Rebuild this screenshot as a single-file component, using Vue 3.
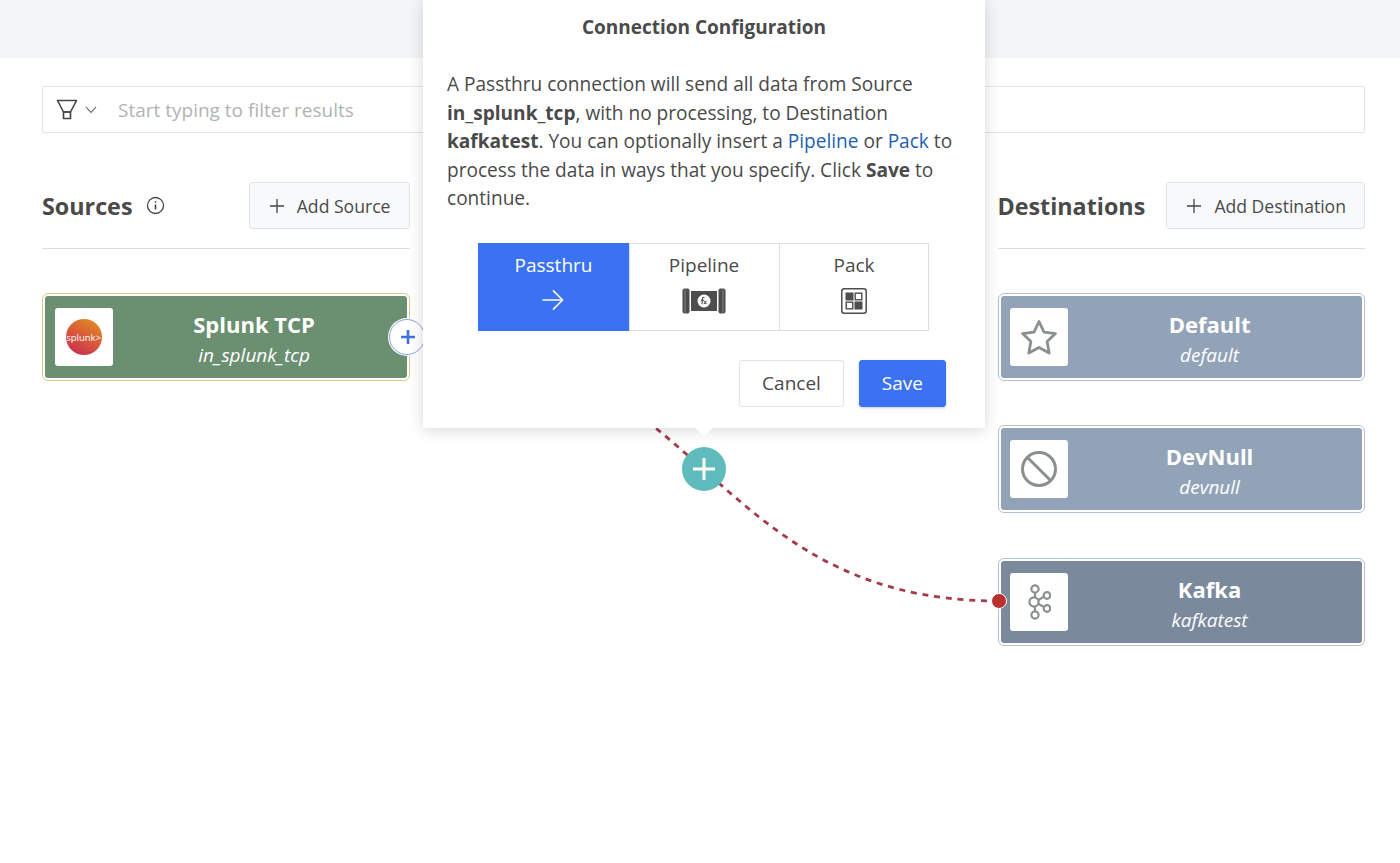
<script setup>
const destinations = [
  { name: 'Default', id: 'default', icon: 'star' },
  { name: 'DevNull', id: 'devnull', icon: 'null' },
  { name: 'Kafka', id: 'kafkatest', icon: 'kafka', active: true }
]
</script>

<template>
  <div class="page">
    <div class="topbar"></div>

    <main class="content">
      <div class="filter">
        <svg class="filter-icon" width="22" height="21" viewBox="0 0 22 21" fill="none" stroke="#444" stroke-width="1.6">
          <path d="M1.5 1.5h19L14.5 13H7.5z" stroke-linejoin="round" />
          <path d="M7.5 13h7v6.5h-7z" stroke-linejoin="round" />
        </svg>
        <svg class="chevron" width="12" height="8" viewBox="0 0 12 8" fill="none" stroke="#555" stroke-width="1.1">
          <path d="M1 1l5 5.5L11 1" />
        </svg>
        <span class="placeholder">Start typing to filter results</span>
      </div>

      <div class="columns">
        <section class="column">
          <header class="col-head">
            <h2>Sources</h2>
            <svg class="info" width="19" height="19" viewBox="0 0 19 19" fill="none" stroke="#444" stroke-width="1.3">
              <circle cx="9.5" cy="9.5" r="8" />
              <path d="M9.5 8.5v5M9.5 5.2v1.6" stroke-width="1.6" />
            </svg>
            <button class="add-btn">
              <svg width="14" height="14" viewBox="0 0 14 14" stroke="#444" stroke-width="1.3"><path d="M7 0v14M0 7h14" /></svg>
              Add Source
            </button>
          </header>
          <div class="cards">
            <div class="card source">
              <div class="card-inner">
                <div class="logo">
                  <div class="splunk">splunk&gt;</div>
                </div>
                <div class="card-text">
                  <div class="card-name">Splunk TCP</div>
                  <div class="card-id">in_splunk_tcp</div>
                </div>
              </div>
            </div>
          </div>
        </section>

        <section class="column">
          <header class="col-head">
            <h2>Destinations</h2>
            <button class="add-btn">
              <svg width="14" height="14" viewBox="0 0 14 14" stroke="#444" stroke-width="1.3"><path d="M7 0v14M0 7h14" /></svg>
              Add Destination
            </button>
          </header>
          <div class="cards">
            <div v-for="d in destinations" :key="d.id" class="card" :class="{ active: d.active }">
              <div class="card-inner">
                <div class="logo">
                  <svg v-if="d.icon === 'star'" width="38" height="36" viewBox="0 0 38 36" fill="none" stroke="#8a8f90" stroke-width="2.8" stroke-linejoin="round">
                    <path d="M19 2.5l5 10.6 11.5 1.5-8.4 8 2.1 11.4L19 28.4 8.8 34l2.1-11.4-8.4-8 11.5-1.5z" />
                  </svg>
                  <svg v-else-if="d.icon === 'null'" width="38" height="38" viewBox="0 0 38 38" fill="none" stroke="#8a8f90" stroke-width="3">
                    <circle cx="19" cy="19" r="16.5" />
                    <path d="M7.5 7.5l23 23" />
                  </svg>
                  <svg v-else width="24" height="36" viewBox="0 0 24 36" fill="none" stroke="#8a8f90" stroke-width="2.2">
                    <circle cx="8" cy="5" r="3.6" />
                    <circle cx="7" cy="18" r="4.6" />
                    <circle cx="8" cy="31" r="3.6" />
                    <circle cx="20" cy="11.5" r="3.3" />
                    <circle cx="20" cy="24.5" r="3.3" />
                    <path d="M8 8.8V13M8 22.8v4.4M11.5 16l5.5-3.4M11.5 20l5.5 3" />
                  </svg>
                </div>
                <div class="card-text">
                  <div class="card-name">{{ d.name }}</div>
                  <div class="card-id">{{ d.id }}</div>
                </div>
              </div>
            </div>
          </div>
        </section>
      </div>
    </main>

    <svg class="wire" width="1400" height="863" viewBox="0 0 1400 863" fill="none">
      <path d="M407 337C703 337 703 601 999 601" stroke="#a63a48" stroke-width="2.8" stroke-dasharray="6 5.8" />
    </svg>

    <div class="port">
      <svg width="14" height="14" viewBox="0 0 14 14" stroke="#3f72d8" stroke-width="2.6"><path d="M7 0v14M0 7h14" /></svg>
    </div>
    <div class="mid-plus">
      <svg width="22" height="22" viewBox="0 0 22 22" stroke="#fff" stroke-width="3"><path d="M11 0v22M0 11h22" /></svg>
    </div>
    <div class="end-dot"></div>

    <div class="modal">
      <div class="modal-title">Connection Configuration</div>
      <p class="modal-body">
        A Passthru connection will send all data from Source <b>in_splunk_tcp</b>, with no processing, to Destination
        <b>kafkatest</b>. You can optionally insert a <a>Pipeline</a> or <a>Pack</a> to process the data in ways that you
        specify. Click <b>Save</b> to continue.
      </p>

      <div class="segments">
        <div class="segment selected">
          <span>Passthru</span>
          <svg class="arrow" width="23" height="22" viewBox="0 0 24 24" fill="none" stroke="#fff" stroke-width="1.6">
            <path d="M1 12h21M12.5 1.5L23 12 12.5 22.5" />
          </svg>
        </div>
        <div class="segment">
          <span>Pipeline</span>
          <svg width="44" height="26" viewBox="0 0 44 26">
            <rect x="0.5" y="0.5" width="7" height="25" rx="2" fill="#4d4d4d" />
            <rect x="2.6" y="1" width="0.9" height="24" fill="#8a8a8a" />
            <rect x="9" y="3" width="26" height="20" fill="#4d4d4d" />
            <rect x="36.5" y="0.5" width="7" height="25" rx="2" fill="#4d4d4d" />
            <rect x="40.5" y="1" width="0.9" height="24" fill="#8a8a8a" />
            <circle cx="22" cy="13" r="6.5" fill="#fff" />
            <path d="M22.5 9.5c-1.6-.5-2 .4-2.1 1.6l-.4 5M18.8 12.4h3M22 13l2.4 3M24.4 13L22 16" fill="none" stroke="#4d4d4d" stroke-width="1.1" />
          </svg>
        </div>
        <div class="segment">
          <span>Pack</span>
          <svg width="26" height="26" viewBox="0 0 26 26">
            <rect x="0.8" y="0.8" width="24.4" height="24.4" rx="2.5" fill="none" stroke="#4d4d4d" stroke-width="1.5" />
            <rect x="4.5" y="4.5" width="8" height="8" fill="#4d4d4d" />
            <rect x="14.2" y="5.2" width="6.6" height="6.6" fill="none" stroke="#4d4d4d" stroke-width="1.4" />
            <rect x="5.2" y="14.2" width="6.6" height="6.6" fill="none" stroke="#4d4d4d" stroke-width="1.4" />
            <rect x="13.5" y="13.5" width="8" height="8" fill="#4d4d4d" />
          </svg>
        </div>
      </div>

      <div class="modal-actions">
        <button class="btn">Cancel</button>
        <button class="btn primary">Save</button>
      </div>
      <div class="caret"></div>
    </div>
  </div>
</template>

<style scoped>
.page {
  position: relative;
  width: 1400px;
  height: 863px;
  overflow: hidden;
  background: #fff;
  color: #4a4a4a;
  font-family: "Open Sans", "Noto Sans", sans-serif;
}

.topbar {
  height: 58px;
  background: #f4f5f7;
}

.content {
  padding: 28px 35px 0 42px;
}

.filter {
  display: flex;
  align-items: center;
  height: 47px;
  box-sizing: border-box;
  padding-left: 13px;
  border: 1px solid #e2e4e7;
  border-radius: 2px;
}

.chevron {
  margin-left: 7px;
}

.placeholder {
  margin-left: 21px;
  font-size: 19px;
  color: #b1b3b6;
}

.columns {
  display: flex;
  justify-content: space-between;
  margin-top: 49px;
}

.column {
  width: 367.5px;
}

.col-head {
  display: flex;
  align-items: center;
  height: 67px;
  box-sizing: border-box;
  padding-bottom: 19px;
  border-bottom: 1px solid #dcdee1;
}

.col-head h2 {
  margin: 0;
  font-size: 23.3px;
  font-weight: 700;
  color: #4a4a4a;
}

.info {
  margin-left: 14px;
}

.add-btn {
  display: flex;
  align-items: center;
  gap: 13px;
  height: 47px;
  margin-left: auto;
  padding: 0 18px 0 20px;
  border: 1px solid #dfe2e6;
  border-radius: 3px;
  background: #f8f9fb;
  color: #4a4a4a;
  font-family: inherit;
  font-size: 17.6px;
}

.cards {
  display: flex;
  flex-direction: column;
  gap: 44.4px;
  margin-top: 44px;
}

.card {
  height: 88px;
  box-sizing: border-box;
  padding: 2px;
  border: 1px solid #b5c0cc;
  border-radius: 6px;
  background: #fff;
}

.card.source {
  border-color: #d8c98f;
}

.card-inner {
  display: flex;
  align-items: center;
  height: 100%;
  padding: 0 11px 0 9.6px;
  border-radius: 3px;
  background: #92a3b8;
}

.source .card-inner {
  background: #6b8f71;
}

.active .card-inner {
  background: #7a899c;
}

.logo {
  display: flex;
  flex: none;
  align-items: center;
  justify-content: center;
  width: 58px;
  height: 58px;
  border-radius: 3px;
  background: #fff;
}

.splunk {
  display: flex;
  align-items: center;
  justify-content: center;
  width: 36px;
  height: 36px;
  border-radius: 50%;
  background: linear-gradient(30deg, #c8314f 10%, #d9593a 50%, #e08a22 90%);
  color: #fff;
  font-size: 9.5px;
}

.card-text {
  flex: 1;
  padding-top: 6px;
  color: #fff;
  text-align: center;
}

.card-name {
  font-size: 22px;
  font-weight: 700;
  line-height: 31px;
}

.card-id {
  font-size: 19px;
  font-style: italic;
  line-height: 31px;
}

.wire {
  position: absolute;
  top: 0;
  left: 0;
}

.port {
  position: absolute;
  top: 319px;
  left: 389px;
  display: flex;
  align-items: center;
  justify-content: center;
  width: 36px;
  height: 36px;
  box-sizing: border-box;
  padding-left: 2px;
  border: 1px solid #8aa7dc;
  border-radius: 50%;
  background: #fff;
  box-shadow: 0 0 0 1px #fff;
}

.mid-plus {
  position: absolute;
  top: 447px;
  left: 681.5px;
  display: flex;
  align-items: center;
  justify-content: center;
  width: 44px;
  height: 44px;
  border-radius: 50%;
  background: #60bcbc;
}

.end-dot {
  position: absolute;
  top: 593px;
  left: 991px;
  width: 14px;
  height: 14px;
  border: 1.5px solid #fff;
  border-radius: 50%;
  background: #b9312f;
}

.modal {
  position: absolute;
  top: 0;
  left: 423px;
  width: 562px;
  height: 428px;
  box-sizing: border-box;
  padding: 0 24px;
  background: #fff;
  box-shadow: 0 2px 14px rgba(0, 0, 0, 0.16);
}

.modal-title {
  padding-top: 14px;
  font-size: 19px;
  font-weight: 700;
  line-height: 26px;
  text-align: center;
}

.modal-body {
  margin: 30px 0 0;
  font-size: 19.08px;
  line-height: 28.6px;
}

.modal-body a {
  color: #1f5fb4;
}

.segments {
  display: flex;
  width: 451px;
  height: 88px;
  box-sizing: border-box;
  margin: 30px 0 0 31px;
  border: 1px solid #dcdee1;
}

.segment {
  display: flex;
  flex: none;
  flex-direction: column;
  align-items: center;
  width: 150px;
  box-sizing: border-box;
  gap: 10px;
  padding-top: 8px;
  border-left: 1px solid #dcdee1;
  font-size: 19px;
  line-height: 26px;
}

.segment:nth-child(2) {
  padding-right: 1px;
}

.segment:last-child {
  width: 149px;
}

.segment.selected {
  width: 151px;
  margin: -1px 0 -1px -1px;
  padding-top: 9px;
  border-left: 0;
  background: #3b72f2;
  color: #fff;
}

.arrow {
  margin: 1px 2px 0 0;
}

.modal-actions {
  display: flex;
  justify-content: flex-end;
  gap: 15px;
  margin: 29px 15px 0 0;
}

.btn {
  height: 47px;
  padding: 0 22px;
  border: 1px solid #e2e4e7;
  border-radius: 3px;
  background: #fff;
  color: #4a4a4a;
  font-family: inherit;
  font-size: 19px;
}

.btn.primary {
  border-color: #3b72f2;
  background: #3b72f2;
  color: #fff;
  box-shadow: 0 1px 3px rgba(0, 0, 0, 0.2);
}

.caret {
  position: absolute;
  bottom: -9px;
  left: 272px;
  width: 0;
  height: 0;
  border-top: 9px solid #fff;
  border-right: 9px solid transparent;
  border-left: 9px solid transparent;
}
</style>
